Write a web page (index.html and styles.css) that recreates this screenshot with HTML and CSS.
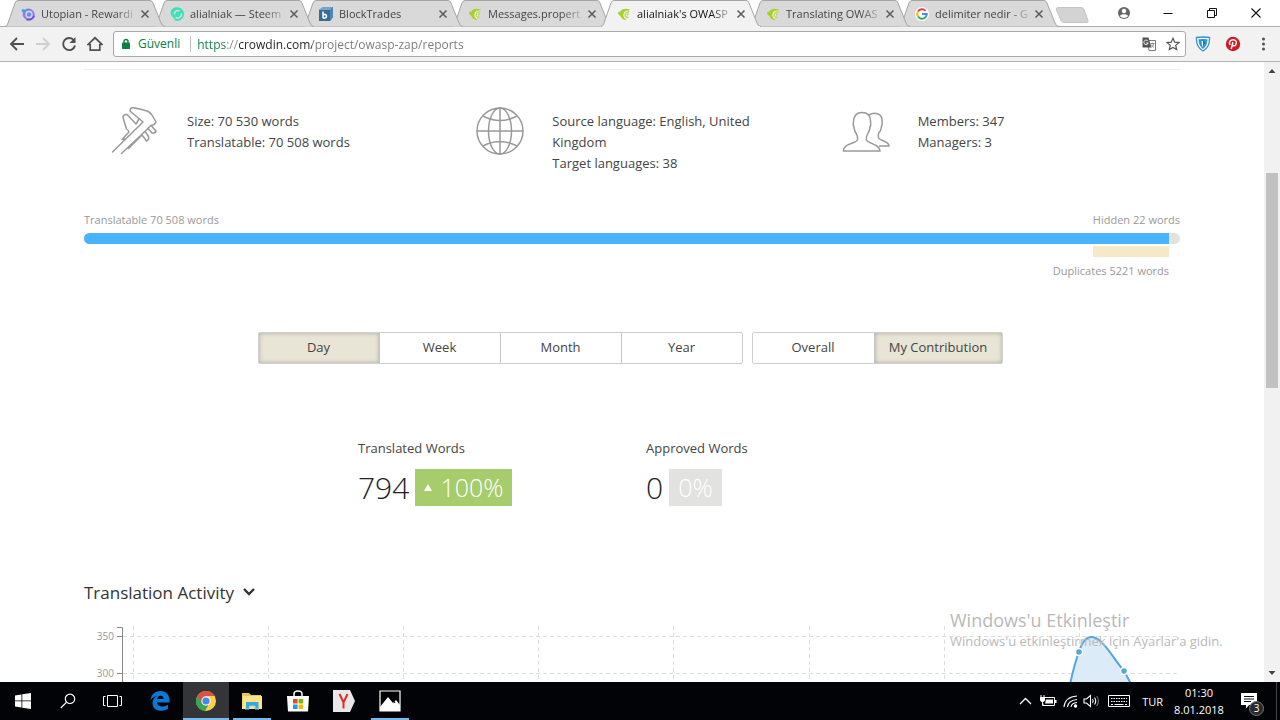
FILE: index.html
```html
<!DOCTYPE html>
<html lang="tr">
<head>
<meta charset="utf-8">
<title>alialniak's OWASP ZAP reports</title>
<link rel="stylesheet" href="styles.css">
</head>
<body>
<svg class="defs" width="0" height="0" aria-hidden="true">
  <symbol id="tab-shape" viewBox="0 0 160 27" preserveAspectRatio="none"><path d="M0 26.5C2 26 2.500 24.500 3 23L10 3Q11 .5 13 .5H145Q147 .5 148 3L156 23Q157 26.500 160 26.500"/></symbol>
  <symbol id="close" viewBox="0 0 12 12"><path d="M2.500 2.500l7 7m0-7l-7 7" fill="none" stroke="#5a5a5a" stroke-width="1.500"/></symbol>
  <symbol id="crowdin" viewBox="0 0 14 14"><path d="M12.500 2.500C8 .8 4.500 2 3.300 4.500L1 5.300c0 2 .8 3 2.300 3.500C4.300 12 6.500 13 9 12.800" fill="#a9cf2a"/><path d="M12.300 3C8 2.800 5.800 5 5.800 8c.2 2 1.200 3.800 3 4.600" fill="#eef3d8" stroke="#a9cf2a"/><path d="M12.300 5C9.500 4.600 8 6.200 8 8c.2 1.800 1.500 2.600 3.500 2.400M12 7c-1.200-.3-2 .2-2 1.200" fill="none" stroke="#b9d75a" stroke-width="1.200"/></symbol>
</svg>

<header class="browser">
  <div class="tabstrip">
    <div class="tab t1"><svg class="tab-bg"><use href="#tab-shape"/></svg>
      <svg class="fav" viewBox="0 0 14 14"><path d="M0 3c2 1 3 0 4 0 3-3 8-1 9.500 3 1 5-4 8-8 6.500C2 11 1 8 2 6z" fill="#8a7fe8"/><path d="M1 3c4 0 6 2 6 5" stroke="#43a8ee" stroke-width="2" fill="none"/><circle cx="8" cy="7.500" r="3" fill="none" stroke="#d8d9f5" stroke-width="1.300"/><path d="M5.500 12.500c4 1 7-1 8-4" stroke="#7644cf" stroke-width="1.500" fill="none"/></svg>
      <span class="title">Utopian - Rewardi</span><button class="x" aria-label="Kapat"><svg><use href="#close"/></svg></button></div>
    <div class="tab t2"><svg class="tab-bg"><use href="#tab-shape"/></svg>
      <svg class="fav" viewBox="0 0 14 14"><path d="M2 9.500C-1 6 1 1 6 .3c4-.5 8 2.200 8 6.700 0 5-5 8-9 6.500-.2-1.500-1.500-2.500-3-4z" fill="#3fe0b8"/><path d="M4.500 7.500C4 4.500 7 2.500 9.500 4M5.500 10.500c3 1.500 6.500-.5 6-4" stroke="#dcdcdc" stroke-width="1.500" fill="none"/></svg>
      <span class="title">alialniak — Steem</span><button class="x" aria-label="Kapat"><svg><use href="#close"/></svg></button></div>
    <div class="tab t3"><svg class="tab-bg"><use href="#tab-shape"/></svg>
      <svg class="fav" viewBox="0 0 14 14"><path d="M0 3l4-3h10v10l-3 4H0z" fill="#386a93"/><path d="M0 3l4-3h10l-3 3z" fill="#78a6c8"/><path d="M11 3l3-3v10l-3 4z" fill="#4e87b1"/><path d="M4 4.500V11M4 8.500c1-2 4-1 3.500 1S5 11.500 4 10.500" stroke="#fff" stroke-width="1.500" fill="none"/></svg>
      <span class="title">BlockTrades</span><button class="x" aria-label="Kapat"><svg><use href="#close"/></svg></button></div>
    <div class="tab t4"><svg class="tab-bg"><use href="#tab-shape"/></svg><svg class="fav"><use href="#crowdin"/></svg>
      <span class="title">Messages.propert</span><button class="x" aria-label="Kapat"><svg><use href="#close"/></svg></button></div>
    <div class="tab t5 active"><svg class="tab-bg"><use href="#tab-shape"/></svg><svg class="fav"><use href="#crowdin"/></svg>
      <span class="title">alialniak's OWASP</span><button class="x" aria-label="Kapat"><svg><use href="#close"/></svg></button></div>
    <div class="tab t6"><svg class="tab-bg"><use href="#tab-shape"/></svg><svg class="fav"><use href="#crowdin"/></svg>
      <span class="title">Translating OWAS</span><button class="x" aria-label="Kapat"><svg><use href="#close"/></svg></button></div>
    <div class="tab t7"><svg class="tab-bg"><use href="#tab-shape"/></svg>
      <svg class="fav" viewBox="0 0 14 14"><circle cx="7" cy="7" r="7" fill="#fff"/><g fill="none" stroke-width="2"><path d="M3 4.500A4.700 4.700 0 0 1 10.500 3.800" stroke="#ea4335"/><path d="M3 9.500a4.700 4.700 0 0 1 0-5" stroke="#fbbc05"/><path d="M10.300 10.400A4.700 4.700 0 0 1 3 9.500" stroke="#34a853"/><path d="M7 7h4.700c0 1.500-.5 2.600-1.400 3.400" stroke="#4285f4"/></g></svg>
      <span class="title">delimiter nedir - G</span><button class="x" aria-label="Kapat"><svg><use href="#close"/></svg></button></div>
    <button class="newtab" aria-label="Yeni sekme"><svg viewBox="0 0 34 18"><path d="M3 1.500h23q2 0 3 2l4 11q.5 2-1 2H9q-2 0-3-2L1.500 4Q.5 1.500 3 1.500z" fill="#d3d3d3" stroke="#c4c4c4"/></svg></button>
    <div class="winctl">
      <button aria-label="Kullanıcı"><svg viewBox="0 0 14 14"><circle cx="7" cy="6" r="6" fill="#666"/><circle cx="7" cy="4" r="2.200" fill="#fff"/><path d="M2.800 9c1.500-2.500 7-2.500 8.400 0-2 2.600-6.400 2.600-8.400 0z" fill="#fff"/></svg></button>
      <button aria-label="Simge durumuna küçült"><svg viewBox="0 0 14 14"><path d="M2.500 6.500h9" stroke="#111"/></svg></button>
      <button aria-label="Önceki boyut"><svg viewBox="0 0 14 14"><path d="M2.500 3.500h7v7h-7zM4.500 3.500v-2h7v7h-2" fill="none" stroke="#111"/></svg></button>
      <button aria-label="Pencereyi kapat"><svg viewBox="0 0 14 14"><path d="M2.500 1.500l9 9m0-9l-9 9" stroke="#111" stroke-width="1.100"/></svg></button>
    </div>
  </div>
  <div class="toolbar">
    <nav class="navbtns">
      <button aria-label="Geri"><svg viewBox="0 0 16 16"><path d="M15 8H2.500M8 2L2 8l6 6" fill="none" stroke="#505050" stroke-width="1.800"/></svg></button>
      <button aria-label="İleri"><svg viewBox="0 0 16 16"><path d="M1 8h12.500M8 2l6 6-6 6" fill="none" stroke="#d0d0d0" stroke-width="1.800"/></svg></button>
      <button aria-label="Yenile"><svg viewBox="0 0 16 16"><path d="M13 4.500A6 6 0 1 0 14 9.500" fill="none" stroke="#505050" stroke-width="1.900"/><path d="M14.500 1v6h-6z" fill="#505050"/></svg></button>
      <button aria-label="Giriş sayfası"><svg viewBox="0 0 16 16"><path d="M1 8.500L8 1.800l7 6.700h-2.200v5.600H3.200V8.500z" fill="none" stroke="#505050" stroke-width="1.700"/></svg></button>
    </nav>
    <div class="omnibox">
      <svg class="lock" viewBox="0 0 10 12"><path d="M3 5V3.500a2 2 0 0 1 4 0V5" fill="none" stroke="#0b8043" stroke-width="1.400"/><rect x="1" y="4.500" width="8" height="6.500" rx=".7" fill="#0b8043"/></svg>
      <span class="secure">Güvenli</span>
      <input class="url" aria-label="Adres" value="https://crowdin.com/project/owasp-zap/reports">
      <button aria-label="Çevir"><svg viewBox="0 0 14 14"><path d="M5.500 3.500h8v10H7z" fill="#fff" stroke="#777"/><path d="M.5.5h6l3 10h-9z" fill="#555"/><path d="M6 4.200A2.200 2.200 0 1 0 6.200 6H4.300" fill="none" stroke="#fff"/><path d="M8.500 6.500h4M10.500 5.500v1M11.700 6.500c-.3 1.700-1 3-2 3.800M9.300 7.500c.7 1.400 1.500 2.200 2.700 3" fill="none" stroke="#777" stroke-width=".8"/></svg></button>
      <button aria-label="Yer işareti"><svg viewBox="0 0 14 14"><path d="M7 1.300l1.700 3.900 4.200.4-3.200 2.800 1 4.200L7 10.400l-3.700 2.200 1-4.200L1.100 5.600l4.200-.4z" fill="none" stroke="#555" stroke-width="1.200"/></svg></button>
    </div>
    <div class="exts">
      <button aria-label="Kalkan"><svg viewBox="0 0 16 16"><path d="M1.500 1.500q6.500-1 13 0Q15 11 8 15 1 11 1.500 1.500z" fill="#fff" stroke="#2a94cf" stroke-width="1.300"/><path d="M3.500 3.300q4.500-.7 9 0Q12.500 9.500 8 13 3.500 9.500 3.500 3.300z" fill="#2a94cf"/><path d="M6.500 5h4Q10.500 8.500 8 11 6.500 9 6.500 5z" fill="#fff"/><path d="M8 5h2.500Q10.500 8.500 8 11z" fill="#1779b5"/></svg></button>
      <button aria-label="Pinterest"><svg viewBox="0 0 16 16"><circle cx="8" cy="8" r="7.200" fill="#ce1b26"/><path d="M7.900 6.300L6.200 13M5 9C3.200 5.600 6 3.500 8.500 3.700c3 .3 3.400 3 2.300 4.900-1 1.700-2.700 1.500-3.400.4" fill="none" stroke="#fff" stroke-width="1.500"/></svg></button>
      <button aria-label="Menü"><svg viewBox="0 0 16 16"><g fill="#505050"><circle cx="8.500" cy="3" r="1.500"/><circle cx="8.500" cy="8" r="1.500"/><circle cx="8.500" cy="13" r="1.500"/></g></svg></button>
    </div>
  </div>
</header>

<div class="viewport">
  <main class="page">
    <section class="facts">
      <div class="fact">
        <svg viewBox="0 0 48 48" fill="none" stroke="#999" stroke-width="1.500" stroke-linejoin="round" stroke-linecap="round"><path d="M1.500 45L32 15 19 4Q19 .5 22.500.7 30 2 36 4 39 5 41 8L45 15Q44 18 40 18.500L45 24Q44.500 26.500 41 26L37 21.500"/><path d="M28 12L25 17 16 7.500Q12.500 7 12 10.500L15.500 22Q18.500 24 17.500 25.500L11 32.500 14 32"/><path d="M10.500 46.500L36 22.500Q38 20 40 18.500M17.500 41.500L31 28 35.500 34Q38.500 32.500 37.500 29.500L34.500 25M17.500 41.500L18.500 39"/></svg>
        <p>Size: 70 530 words<br>Translatable: 70 508 words</p>
      </div>
      <div class="fact">
        <svg viewBox="0 0 48 48" fill="none" stroke="#999" stroke-width="1.500"><circle cx="24" cy="24" r="23"/><ellipse cx="24" cy="24" rx="11.500" ry="23"/><path d="M24 1v46M1 24h46M7 9q17 9 34 0M7 39q17-9 34 0"/></svg>
        <p>Source language: English, United<br>Kingdom<br>Target languages: 38</p>
      </div>
      <div class="fact">
        <svg viewBox="0 0 48 48" fill="none" stroke="#999" stroke-width="1.500"><path d="M1.500 44c0-8 12-7 14-11 .5-2 0-4-1-6-2-2-2-4-2.500-7-1.500-2-.5-3-.5-6C12 8 15 5.500 20 5.500S28.500 8 28.500 14c0 3 1 4-.5 6-.5 3-.5 5-2.500 7-1 2-1.500 4-1 6 2 4 13.500 4 13.500 11z"/><path d="M27 8c5-3 13-2 13 5 0 3 1 4-.5 6-.3 3-.5 5-2.500 6.500-1 2-1 4-.5 5.500 1.500 3 10.500 3 10.500 8H37"/></svg>
        <p>Members: 347<br>Managers: 3</p>
      </div>
    </section>

    <section class="words">
      <div class="word-labels"><span>Translatable 70 508 words</span><span>Hidden 22 words</span></div>
      <div class="bar"><div class="bar-fill"></div></div>
      <div class="dups"><div class="dup-bar"></div><span>Duplicates 5221 words</span></div>
    </section>

    <section class="filters">
      <div class="group period">
        <button class="on">Day</button><button>Week</button><button>Month</button><button>Year</button>
      </div>
      <div class="group">
        <button>Overall</button><button class="on wide">My Contribution</button>
      </div>
    </section>

    <section class="totals">
      <div class="total"><h3>Translated Words</h3>
        <div class="figure"><span class="num">794</span><span class="pct up"><svg viewBox="0 0 8 7"><path d="M4 0l4 7H0z" fill="#fff"/></svg>100%</span></div></div>
      <div class="total"><h3>Approved Words</h3>
        <div class="figure"><span class="num">0</span><span class="pct">0%</span></div></div>
    </section>

    <section class="activity">
      <h2><button>Translation Activity <svg viewBox="0 0 14 9"><path d="M2 1l5 5 5-5" fill="none" stroke="#333" stroke-width="2.400"/></svg></button></h2>
      <svg class="chart" viewBox="0 0 1096 80" role="img" aria-label="Translation Activity">
        <g stroke="#dedede" stroke-dasharray="4 3" fill="none">
          <path d="M49.500 6v74M184.500 6v74M319.500 6v74M454.500 6v74M589.500 6v74M725.500 6v74M860.500 6v74M995.500 6v74M39 16.500h1054M39 53.500h1054"/>
        </g>
        <path d="M33 7.500h5.500V80M33 16.500h5M33 53.500h5" fill="none" stroke="#888"/>
        <g class="axis"><text x="30" y="20">350</text><text x="30" y="57">300</text></g>
        <path d="M983 80Q989 47 995 32C999 19 1003 17 1008 17C1018 17 1029 38 1040 51Q1045 59 1054 80z" fill="#dcebf8"/>
        <path d="M983 80Q989 47 995 32C999 19 1003 17 1008 17C1018 17 1029 38 1040 51Q1045 59 1054 80" fill="none" stroke="#55a5dd" stroke-width="2"/>
        <g fill="#55a5dd" stroke="#fff" stroke-width="1.500"><circle cx="995" cy="32" r="3.500"/><circle cx="1040" cy="51" r="3.500"/></g>
      </svg>
    </section>
  </main>
  <div class="scrollbar" aria-hidden="true">
    <svg viewBox="0 0 8 6"><path d="M4 1l3.500 4h-7z" fill="#444"/></svg>
    <div class="track"><div class="thumb"></div></div>
    <svg viewBox="0 0 8 6"><path d="M4 5l3.500-4h-7z" fill="#444"/></svg>
  </div>
  <div class="watermark"><strong>Windows'u Etkinleştir</strong><span>Windows'u etkinleştirmek için Ayarlar'a gidin.</span></div>
</div>

<footer class="taskbar">
  <div class="sys">
    <button aria-label="Başlat"><svg viewBox="0 0 16 16" fill="#fff"><path d="M0 2.500l6.500-1V7.500H0zM7.300 1.300L16 0v7.500H7.300zM0 8.300h6.500v6.200L0 13.600zM7.300 8.300H16V16l-8.700-1.300z"/></svg></button>
    <button aria-label="Ara"><svg viewBox="0 0 16 16" fill="none" stroke="#fff" stroke-width="1.200"><circle cx="10" cy="5.800" r="4.700"/><path d="M6.600 9.200L.8 15"/></svg></button>
    <button aria-label="Görev görünümü"><svg class="w20" viewBox="0 0 20 16" fill="none" stroke="#fff"><path d="M4.500 2.500h10v11h-10zM2.500 3.500h-2v9h2M16.500 3.500h2v9h-2"/></svg></button>
  </div>
  <div class="apps">
    <button aria-label="Edge"><svg viewBox="0 0 20 20"><path d="M.5 9C1.500 3 5.500 0 10.500 0c6 0 9 4.500 9 9v2.500H7c.3 4.500 6.500 5.300 11 2.300v4C10.500 22 2.500 19.500 2.500 12c0-3.500 2-6 4.500-7.300C4 5.500 2 7 .5 9zM7.200 8h6.500c0-4.500-6-4.500-6.500 0z" fill="#0a78d4"/></svg></button>
    <button class="current" aria-label="Chrome"><svg viewBox="0 0 20 20"><circle cx="10" cy="10" r="10" fill="#fbd04b"/><path d="M10 10L1.300 5A10 10 0 0 0 9 20l4.500-8z" fill="#38a557"/><path d="M1.300 5a10 10 0 0 1 17.400 0H10v5l-4 2z" fill="#dc5145"/><path d="M10 5.300h8.800L14 13z" fill="#fbd04b"/><circle cx="10" cy="10" r="4.700" fill="#f5f5f5"/><circle cx="10" cy="10" r="3.600" fill="#4688f1"/></svg></button>
    <button class="open" aria-label="Dosya Gezgini"><svg viewBox="0 0 20 20"><path d="M0 2h7l2 2h10v14H0z" fill="#e9c65c"/><path d="M1 5h19v13H0z" fill="#fbe38c"/><path d="M4 11h12.500v7H13v-3H7.500v3H4z" fill="#38a8dc"/><path d="M3 18h4.500v-3H13v3h4" fill="none" stroke="#9bd7ef"/></svg></button>
    <button aria-label="Mağaza"><svg class="w22" viewBox="0 0 22 22"><path d="M7 7V4q0-3 4-3t4 3v3" fill="none" stroke="#fff" stroke-width="1.500"/><path d="M0 6h22l-1 15.500H1z" fill="#fff"/><path d="M6 9h4.600v4.500H6z" fill="#e74c2b"/><path d="M11.600 9h4.600v4.500h-4.600z" fill="#7cb900"/><path d="M6 14.500h4.600V19H6z" fill="#1a9fe8"/><path d="M11.600 14.500h4.600V19h-4.600z" fill="#fbb800"/></svg></button>
    <button aria-label="Yandex"><svg class="w22" viewBox="0 0 22 22"><path d="M0 0h17l5 11-5 11H0z" fill="#e8e8e8"/><path d="M6.500 4l4 8.500L14.500 4M10.500 12v6.500" fill="none" stroke="#e12a2a" stroke-width="2"/></svg></button>
    <button class="open" aria-label="Fotoğraflar"><svg class="w22" viewBox="0 0 22 22"><path d="M1 1h20v20H1z" fill="#000" stroke="#fff" stroke-width="1.200"/><path d="M1 17l8-10 5 6 3-3 4 5v6H1z" fill="#fff"/><path d="M14 10l2 3" stroke="#000"/></svg></button>
  </div>
  <div class="tray">
    <svg class="w20" viewBox="0 0 20 16" fill="none" stroke="#fff" stroke-width="1.300"><path d="M5 11l5.500-5.500L16 11"/></svg>
    <svg class="w20" viewBox="0 0 20 16"><path d="M7 4.500h10.500v8H6v-2" fill="none" stroke="#fff"/><path d="M9 6.500h7v4H8zM18 7h1.500v3H18zM3 4h5v3.500L6.500 9h-2L3 7.500z" fill="#fff"/><path d="M4 2v2M7 2v2M5.500 9v3.500H7" stroke="#fff" fill="none"/></svg>
    <svg class="w20" viewBox="0 0 20 16" fill="none" stroke="#fff" stroke-width="1.100"><path d="M5 14Q6 4 18 3M8.500 14Q9 7.500 18 6.500M12 14q.5-4 6-4.500"/><circle cx="16.500" cy="13" r="1.200" fill="#fff"/></svg>
    <svg class="w20" viewBox="0 0 20 16" fill="none" stroke="#fff" stroke-width="1.100"><path d="M3 6h2.500l4-3.500v11L5.500 10H3zM11.500 6q1.500 2 0 4M13.500 4.500q2.500 3.500 0 7"/><path d="M15.700 3q3.500 5 0 10" stroke="#777"/></svg>
    <svg class="w24" viewBox="0 0 24 16" fill="none" stroke="#fff"><path d="M1.500 2.500h21v11h-21z"/><path d="M4 5.500h16M4 8.500h16" stroke-dasharray="1.500 1"/><path d="M4 11.500h2M7.500 11.500h9M18 11.500h2"/></svg>
    <span class="lang">TUR</span>
    <div class="clock"><span>01:30</span><span>8.01.2018</span></div>
    <button class="notif" aria-label="Bildirimler"><svg viewBox="0 0 16 16"><path d="M0 0h16v12H8l-3 3.500V12H0z" fill="#fff"/><path d="M3 3.500h10M3 6h10M3 8.500h7" stroke="#111"/></svg><span class="badge">3</span></button>
  </div>
</footer>
</body>
</html>
```

FILE: styles.css
```css
* { box-sizing: border-box; }
body {
  margin: 0;
  height: 100vh;
  display: flex;
  flex-direction: column;
  overflow: hidden;
  background: #fff;
  color: #444;
  font: 13px/21px "Open Sans", "Noto Sans", sans-serif;
}
button { font: inherit; color: inherit; padding: 0; border: 0; background: none; }
svg { display: block; flex: none; }
h2, h3, p { margin: 0; font-weight: 400; }
.defs { position: absolute; }

/* browser chrome */
.browser { flex: none; background: #fff; }
.tabstrip { display: flex; height: 27px; padding-left: 5px; box-shadow: inset 0 -1px #adadad; }
.tab {
  position: relative;
  flex: 0 1 160px;
  min-width: 0;
  height: 27px;
  margin-right: -11px;
  padding: 1px 14px 0 16px;
  display: flex;
  align-items: center;
  color: #444;
  font-size: 11px;
  line-height: 16px;
}
.tab > * { position: relative; }
.tab > .tab-bg { position: absolute; left: 0; top: 0; width: 100%; height: 100%; fill: #d9d9d9; stroke: #a5a5a5; }
.tab.active { color: #111; }
.tab.active > .tab-bg { fill: #f2f2f2; }
.t1 { z-index: 7; } .t2 { z-index: 6; } .t3 { z-index: 5; } .t4 { z-index: 4; }
.t5 { z-index: 8; } .t6 { z-index: 2; } .t7 { z-index: 1; }
.tab.active::after { content: ""; position: absolute; left: 1px; right: 1px; bottom: 0; height: 1px; background: #f2f2f2; }
.fav { width: 14px; height: 14px; }
.title {
  flex: 1;
  min-width: 0;
  margin: 0 0 0 6px;
  overflow: hidden;
  white-space: nowrap;
  -webkit-mask-image: linear-gradient(90deg, #000 75%, transparent);
  mask-image: linear-gradient(90deg, #000 75%, transparent);
}
.x svg { width: 12px; height: 12px; }
.newtab { align-self: center; margin: 2px 0 0 7px; }
.newtab svg { width: 34px; height: 18px; }
.winctl { display: flex; margin-left: auto; padding-right: 2px; align-items: center; }
.winctl button { width: 44px; display: flex; justify-content: center; }
.winctl svg { width: 14px; height: 14px; }

.toolbar { display: flex; align-items: center; height: 35px; padding: 0 8px; background: #f2f2f2; border-bottom: 1px solid #b3b3b3; }
.navbtns { display: flex; gap: 8px; width: 105px; }
.navbtns button, .exts button { width: 18px; display: flex; justify-content: center; }
.navbtns svg, .exts svg { width: 16px; height: 16px; }
.omnibox { flex: 1; display: flex; align-items: center; gap: 10px; height: 26px; padding: 0 5px 0 7px; border: 1px solid #a9a9a9; border-radius: 3px; background: #fff; font-size: 12px; }
.lock { width: 10px; height: 12px; margin-right: -3px; }
.secure { padding-right: 10px; margin-right: -4px; border-right: 1px solid #bbb; color: #0b8043; line-height: 16px; }
.url {
  flex: 1;
  min-width: 0;
  padding: 0;
  border: 0;
  outline: 0;
  font: inherit;
  color: transparent;
  background: linear-gradient(90deg, #0b8043 30px, #888 30px, #888 41px, #222 41px, #222 115px, #777 115px);
  -webkit-background-clip: text;
  background-clip: text;
}
.omnibox button svg { width: 14px; height: 14px; }
.exts { display: flex; gap: 12px; padding-left: 8px; }

/* page */
.viewport { position: relative; flex: 1; min-height: 0; display: flex; }
.page { flex: 1; min-width: 0; overflow: hidden; padding: 7px 84px 0; }
.facts { display: grid; grid-template-columns: repeat(3, 1fr); padding-top: 37px; border-top: 1px solid #eee; }
.fact { display: flex; gap: 28px; padding: 0 48px 0 27px; }
.fact svg { width: 48px; height: 48px; }
.fact p { padding-top: 4px; }

.words { padding-top: 35px; color: #999; font-size: 11px; }
.word-labels { display: flex; justify-content: space-between; }
.bar { height: 11px; margin-top: 3px; border-radius: 6px; overflow: hidden; background: #e2e2df; }
.bar-fill { width: 99%; height: 100%; background: #48b3ff; }
.dups { display: flex; flex-direction: column; align-items: flex-end; width: 99%; gap: 3px; padding-top: 2px; }
.dup-bar { width: 7%; height: 11px; background: #f5e9c9; }

.filters { display: flex; justify-content: center; gap: 9px; padding: 51px 4px 0 0; }
.group { display: flex; border: 1px solid #cfcfcf; border-radius: 2px; }
.group button { width: 121px; height: 30px; padding-bottom: 2px; }
.period { width: 485px; }
.period button { flex: 1; }
.group button + button { border-left: 1px solid #c4c4c4; }
.group .on { background: #e8e5d7; box-shadow: inset 0 0 4px #aaa899; }
.group .wide { width: 128px; }

.totals { display: grid; grid-template-columns: 288px auto; justify-content: start; padding: 74px 0 0 25%; }
.total h3 { font-size: 13px; }
.figure { display: flex; align-items: center; gap: 6px; padding-top: 10px; font-weight: 300; }
.num { color: #222; font-size: 30px; line-height: 37px; }
.pct { display: flex; align-items: center; gap: 8px; padding: 0 9px; background: #e2e2e1; color: #fff; font-size: 25px; line-height: 37px; }
.pct.up { background: #a7cc6b; }
.pct svg { width: 8px; height: 7px; }

.activity { padding-top: 74px; }
.activity h2 button { display: flex; align-items: center; gap: 8px; color: #333; font-size: 17px; font-weight: 500; line-height: 25px; }
.activity h2 svg { width: 14px; height: 9px; }
.chart { width: 100%; height: auto; margin-top: 15px; }
.axis { fill: #999; font-size: 10px; text-anchor: end; }

.scrollbar { flex: none; width: 16px; display: flex; flex-direction: column; align-items: center; padding: 6px 0; background: #f1f1f1; }
.scrollbar svg { width: 8px; height: 6px; }
.track { flex: 1; width: 12px; }
.thumb { height: 36%; margin-top: 99px; background: #c1c1c1; }
.watermark { position: absolute; right: 34px; bottom: 30px; width: 296px; display: flex; flex-direction: column; color: #b9b9b9; white-space: nowrap; }
.watermark strong { font-size: 18px; font-weight: 400; line-height: 22px; }

/* taskbar */
.taskbar { flex: none; display: flex; height: 38px; background: #020306; color: #fff; }
.sys, .apps, .tray { display: flex; }
.sys button { width: 45px; display: grid; place-items: center; }
.sys svg { width: 16px; height: 16px; }
.apps { padding-left: 2px; }
.apps button { width: 46px; display: grid; place-items: center; }
.apps svg { width: 20px; height: 20px; }
.apps svg.w22 { width: 22px; height: 22px; }
.current { background: #343539; box-shadow: inset 0 -2px #76b9ed; }
.apps .open { background: linear-gradient(#76b9ed, #76b9ed) center bottom / 38px 2px no-repeat; }
.tray { margin-left: auto; align-items: center; font-size: 11px; line-height: 17px; gap: 2px; }
.tray svg { width: 20px; height: 16px; }
.sys svg.w20 { width: 20px; }
.tray svg.w24 { width: 24px; margin-left: 4px; }
.lang { padding: 0 6px 0 9px; }
.clock { display: flex; flex-direction: column; align-items: center; width: 56px; }
.notif { position: relative; width: 48px; padding-left: 12px; border-right: 1px solid #444; margin-right: 3px; height: 38px; }
.tray .notif svg { width: 16px; height: 16px; }
.badge { position: absolute; left: 20px; top: 19px; width: 15px; height: 15px; border: 1px solid #777; border-radius: 8px; background: #292a2d; font-size: 10px; line-height: 13px; text-align: center; }
```
